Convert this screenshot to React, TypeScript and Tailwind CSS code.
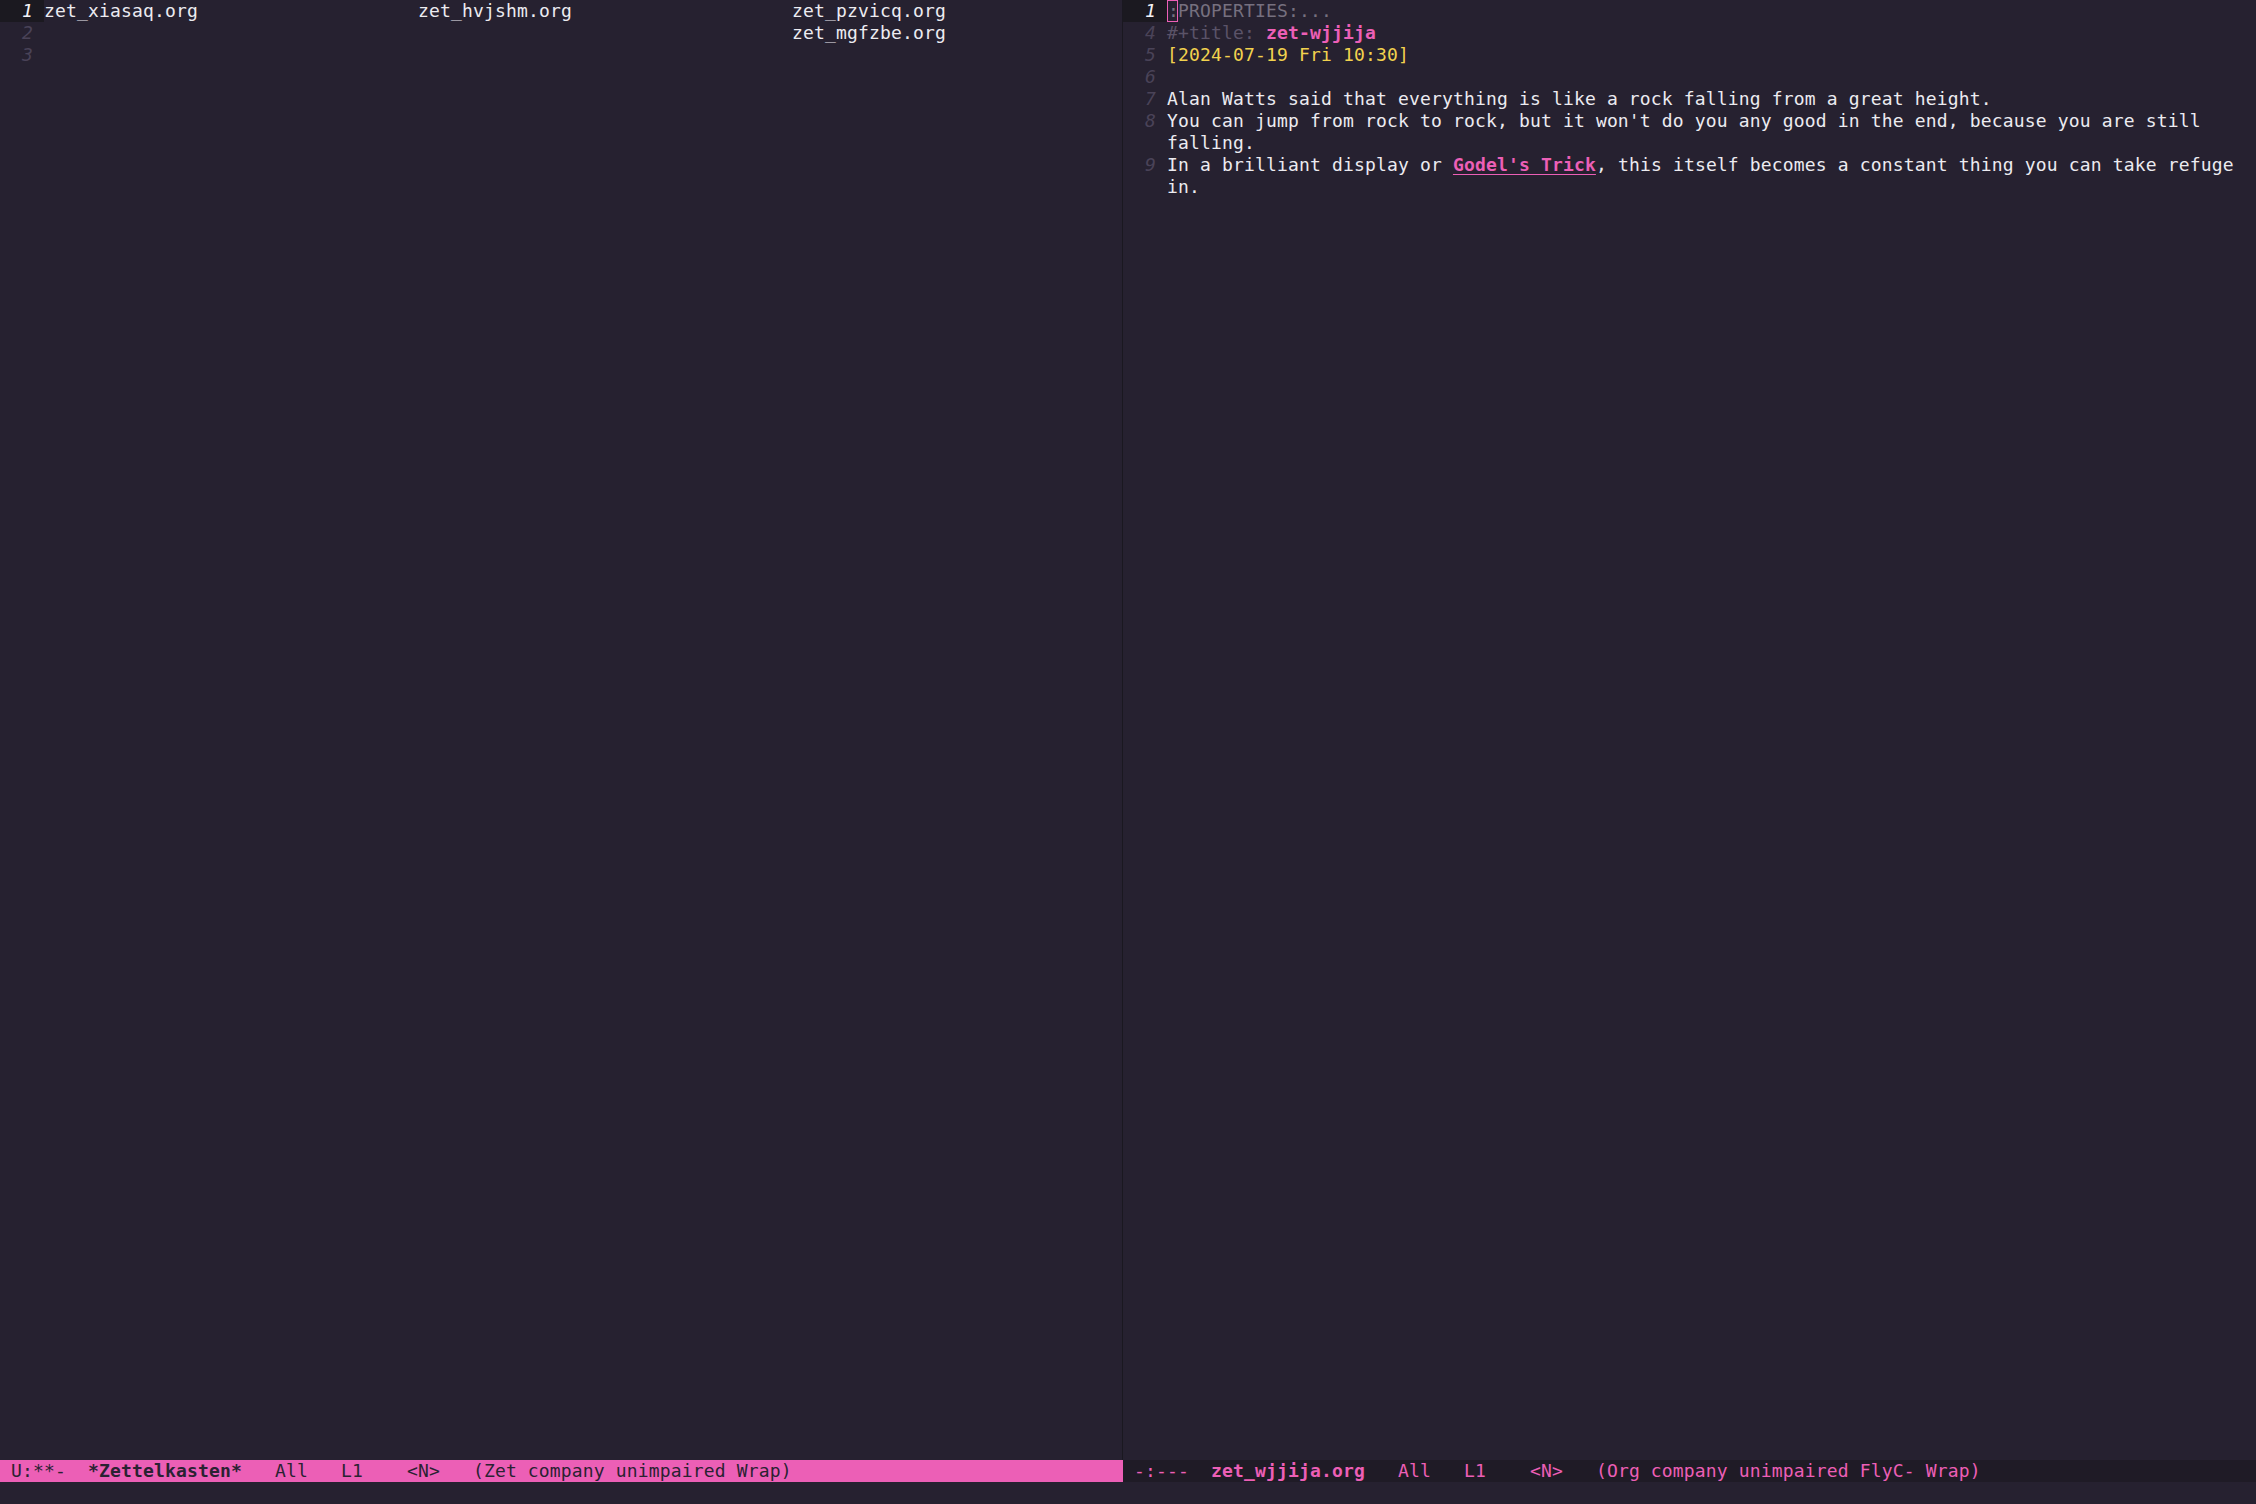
import type { ReactNode } from "react";

const MONO = "font-['DejaVu_Sans_Mono','Liberation_Mono',monospace] text-[18px] tracking-[0.16px] leading-[22px]";

interface RowProps {
  num?: string;
  current?: boolean;
  children?: ReactNode;
}

// one screen line of a buffer: line-number gutter (4 cells) + text
function Row({ num = "", current = false, children }: RowProps) {
  return (
    <div className="flex h-[22px]">
      <div
        className={`w-[44px] shrink-0 pr-[11px] text-right italic ${
          current ? "bg-[#1b1920] text-[#f4f2f7]" : "text-[#4a4358]"
        }`}
      >
        {num}
      </div>
      <div className="whitespace-pre text-[#ecebf0]">{children}</div>
    </div>
  );
}

function FileCell({ name }: { name?: string }) {
  return <span className="inline-block w-[374px]">{name ?? ""}</span>;
}

function ZettelPane() {
  return (
    <div className="flex w-[1122px] flex-col">
      <Row num="1" current>
        <FileCell name="zet_xiasaq.org" />
        <FileCell name="zet_hvjshm.org" />
        <FileCell name="zet_pzvicq.org" />
      </Row>
      <Row num="2">
        <FileCell />
        <FileCell />
        <FileCell name="zet_mgfzbe.org" />
      </Row>
      <Row num="3" />
    </div>
  );
}

function NotePane() {
  return (
    <div className="flex min-w-0 flex-1 flex-col">
      <Row num="1" current>
        <span className="inline-block h-[22px] w-[11px] border border-[#ec5fb6] text-[#76707f] leading-[20px]">:</span>
        <span className="text-[#76707f]">PROPERTIES:...</span>
      </Row>
      <Row num="4">
        <span className="text-[#5b5368]">#+title: </span>
        <span className="font-bold text-[#ec5fb6]">zet-wjjija</span>
      </Row>
      <Row num="5">
        <span className="text-[#f2d24e]">[2024-07-19 Fri 10:30]</span>
      </Row>
      <Row num="6" />
      <Row num="7">Alan Watts said that everything is like a rock falling from a great height.</Row>
      <Row num="8">You can jump from rock to rock, but it won't do you any good in the end, because you are still</Row>
      <Row>falling.</Row>
      <Row num="9">
        In a brilliant display or{" "}
        <span className="font-bold text-[#ec5fb6] underline decoration-[#ec5fb6] decoration-1 underline-offset-[3px]">
          Godel's Trick
        </span>
        , this itself becomes a constant thing you can take refuge
      </Row>
      <Row>in.</Row>
    </div>
  );
}

export default function App() {
  return (
    <div className={`flex h-[1504px] w-[2256px] flex-col overflow-hidden bg-[#262130] ${MONO}`}>
      <div className="flex h-[1460px]">
        <ZettelPane />
        <div className="w-px bg-[#1a1820]" />
        <NotePane />
      </div>

      {/* mode lines */}
      <div className="flex h-[22px]">
        <div className="w-[1123px] whitespace-pre bg-[#ec5fb6] text-[#2a2232]">
          {" U:**-  "}
          <span className="font-bold">*Zettelkasten*</span>
          {"   All   L1    <N>   (Zet company unimpaired Wrap)"}
        </div>
        <div className="flex-1 whitespace-pre bg-[#1f1b26] text-[#ec5fb6]">
          {" -:---  "}
          <span className="font-bold">zet_wjjija.org</span>
          {"   All   L1    <N>   (Org company unimpaired FlyC- Wrap)"}
        </div>
      </div>

      {/* minibuffer */}
      <div className="h-[22px]" />
    </div>
  );
}
